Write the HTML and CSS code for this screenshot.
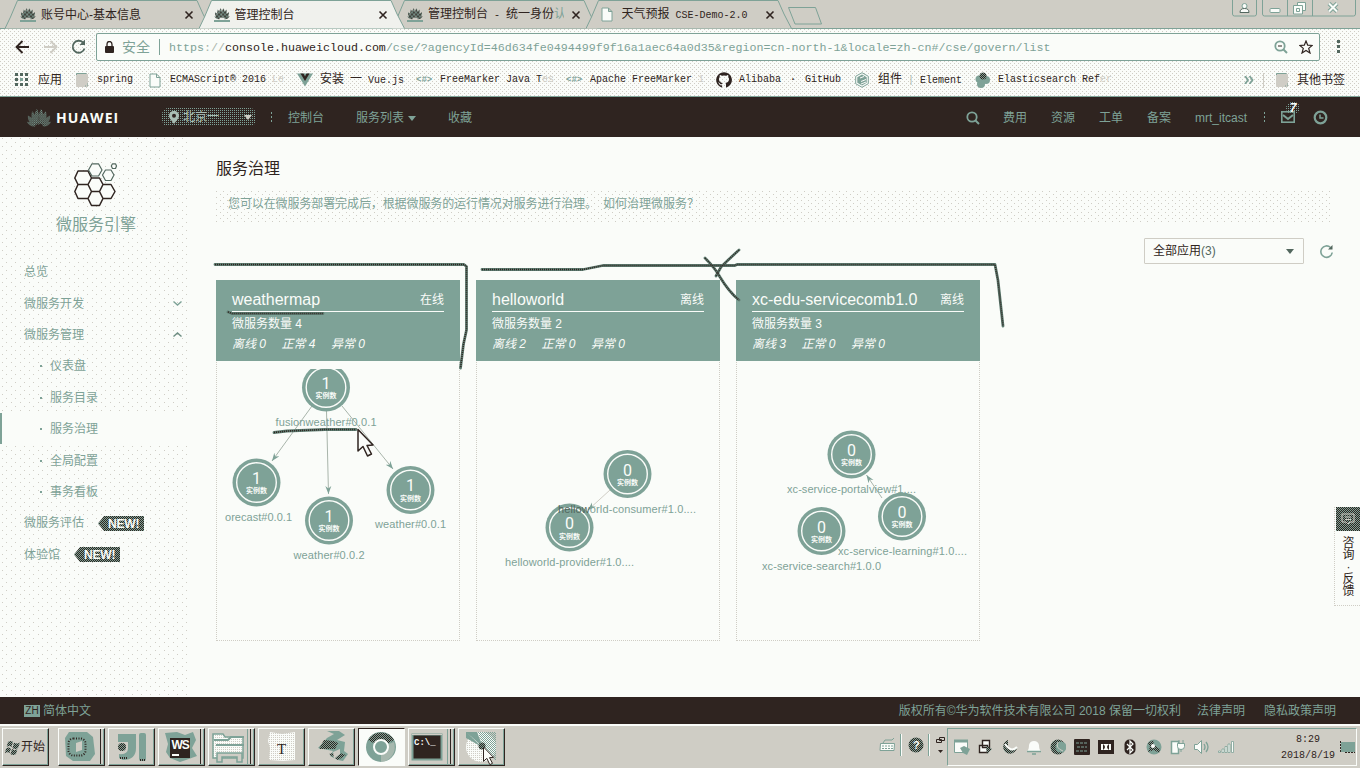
FILE: index.html
```html
<!DOCTYPE html>
<html lang="zh-CN">
<head>
<meta charset="utf-8">
<title>管理控制台</title>
<link rel="stylesheet" href="styles.css">
</head>
<body>
<svg class="defs" width="0" height="0">
  <defs>
    <pattern id="ink" width="2" height="2" patternUnits="userSpaceOnUse"><rect width="2" height="2" fill="#7ea297"/><rect width="1" height="1" fill="#2f2420"/><rect x="1" y="1" width="1" height="1" fill="#2f2420"/></pattern>
    <pattern id="mesh" width="2" height="2" patternUnits="userSpaceOnUse"><rect width="1" height="1" fill="#7ea297"/><rect x="1" y="1" width="1" height="1" fill="#7ea297"/></pattern>
    <pattern id="pale" width="2" height="2" patternUnits="userSpaceOnUse"><rect width="2" height="2" fill="#fafcf9"/><rect width="1" height="1" fill="#cfcdc5"/></pattern>
    <marker id="arrow" markerWidth="9" markerHeight="8" refX="8" refY="4" orient="auto" markerUnits="userSpaceOnUse"><path d="M0 1L8 4L0 7L2.500 4Z" fill="#7ea297"/></marker>
    <symbol id="petals" viewBox="0 0 24 18"><path d="M11.500 16C7 12 7 5 10 1c2 3 3 9 1.500 15zM12.500 16C17 12 17 5 14 1c-2 3-3 9-1.500 15zM10 16C5 13 4 8 5.500 3 9 6 10 11 10 16zM14 16c5-3 6-8 4.500-13C15 6 14 11 14 16zM9 16.500C4 16 1 12 1.500 7 5 8.500 8 12 9 16.500zM15 16.500c5-.5 8-4.500 7.500-9.500C19 8.500 16 12 15 16.500zM8.500 17.500C5 18 2 16 .5 13c3.500 0 6 1.500 8 4.500zM15.500 17.500c3.500.5 6.500-1.500 8-4.500-3.500 0-6 1.500-8 4.500z"/></symbol>
    <symbol id="favicon" viewBox="0 0 16 16"><use href="#petals" width="16" height="13" fill="url(#ink)"/><path d="M0 14h16" stroke="#7ea297" stroke-width="2"/></symbol>
    <symbol id="close" viewBox="0 0 10 10"><path d="M1.500 1.500l7 7M8.500 1.500l-7 7" stroke="#2f2420" stroke-width="1.600"/></symbol>
    <symbol id="doc" viewBox="0 0 12 15"><path d="M1 1h6.500L11 4.500V14H1zM7.500 1v3.500H11" fill="#fafcf9" stroke="#7ea297"/></symbol>
    <symbol id="folder" viewBox="0 0 12 14"><path d="M.5 13.500V.5h10l1 1v12z" fill="#cfcdc5" stroke="#cfcdc5"/><path d="M.5 2V.5h10" fill="none" stroke="#7ea297"/><path d="M9 13h2.500v-3" stroke="#7ea297" fill="none" stroke-dasharray="1 1"/></symbol>
    <symbol id="tab" viewBox="0 0 208 29"><path d="M0 28.500L5.500 17 12.500.5H192L198 14l7.500 14.500" stroke="#7ea297"/></symbol>
    <symbol id="glass" viewBox="0 0 14 14"><circle cx="6" cy="6" r="4.700" fill="none" stroke="#7ea297" stroke-width="1.800"/><path d="M9.500 9.500l3.500 3.500" stroke="#7ea297" stroke-width="2"/></symbol>
    <symbol id="node" viewBox="-25 -25 50 50"><circle r="24" fill="#7ea297"/><circle r="19.800" fill="none" stroke="#fafcf9" stroke-width="1.400"/></symbol>
    <symbol id="new" viewBox="0 0 46 15"><path d="M0 7.500L6 0h40v15H6z" fill="url(#ink)"/></symbol>
    <symbol id="pointer" viewBox="0 0 18 30"><path d="M1.500 1.500V23l5-4.500 4.500 9.500 4-2-4.500-8.500 6-.5z" fill="#fafcf9" stroke="#2f2420" stroke-width="1.500"/></symbol>
    <g id="strokes">
      <path d="M215 264.500H464l2.500 2V330l-3 14-3 24"/>
      <path d="M482 269.500H583l20-4H735l2-1H995l3 16 5 45.500"/>
      <path d="M705 258q10 10 15 19 9 15 19 23M739 250q-10 9-18 17l-5 9"/>
      <path d="M228 312l4 1.500H323"/>
      <path d="M274 432.500l13-1.500 38-1.500h31"/>
    </g>
  </defs>
</svg>

<div class="tabstrip">
  <div class="tab tab-first"><svg class="tab-shape"><use href="#tab" fill="#cfcdc5"/></svg><svg class="fav"><use href="#favicon"/></svg><span class="tab-title">账号中心-基本信息</span><svg class="x"><use href="#close"/></svg></div>
  <div class="tab tab-active"><svg class="tab-shape"><use href="#tab" fill="#f0f1ed"/></svg><svg class="fav"><use href="#favicon"/></svg><span class="tab-title">管理控制台</span><svg class="x"><use href="#close"/></svg></div>
  <div class="tab"><svg class="tab-shape"><use href="#tab" fill="#cfcdc5"/></svg><svg class="fav"><use href="#favicon"/></svg><span class="tab-title">管理控制台<i class="mono"> - </i>统一身份<i class="fade-end">认</i></span><svg class="x"><use href="#close"/></svg></div>
  <div class="tab"><svg class="tab-shape"><use href="#tab" fill="#cfcdc5"/></svg><svg class="fav" viewBox="0 0 16 16"><use href="#doc" width="12" height="15"/></svg><span class="tab-title">天气预报<i class="mono"> CSE-Demo-2.0</i></span><svg class="x"><use href="#close"/></svg></div>
  <svg class="newtab" width="36" height="19"><path d="M1.500.5h27l6 16.500H8z" fill="#cfcdc5" stroke="#7ea297"/></svg>
  <div class="winbtns">
    <svg width="25" height="17"><path d="M.5 0v14q0 2 2 2h20q2 0 2-2V0" fill="none" stroke="#7ea297"/><circle cx="12.500" cy="6" r="2.500" fill="#fafcf9" stroke="#7ea297"/><path d="M8 12.500q0-4 4.500-4t4.500 4z" fill="#fafcf9" stroke="#52675e"/></svg>
    <svg width="94" height="17"><path d="M.5 0v14q0 2 2 2h89q2 0 2-2V0M25.500 0v16M50.500 0v16" fill="none" stroke="#7ea297"/><rect x="8" y="8.500" width="10" height="4" rx="1" fill="#fafcf9" stroke="#7ea297"/><path d="M35.500 2.500h8v8h-8z" fill="#fafcf9" stroke="#7ea297"/><path d="M31.500 5.500h9v8.500h-9zM34.500 8.500h3v3h-3z" fill="#fafcf9" stroke="#7ea297"/><path d="M67 3.500l8 8M75 3.500l-8 8" stroke="#7ea297" stroke-width="4"/><path d="M67 3.500l8 8M75 3.500l-8 8" stroke="#fafcf9" stroke-width="2"/></svg>
  </div>
</div>

<div class="chrome">
  <div class="toolbar">
    <svg width="82" height="20" fill="none" stroke-width="1.800"><path d="M14 10H1.500M7.500 4l-6 6 6 6" stroke="#2f2420" /><path d="M29 10h12.500M35.500 4l6 6-6 6" stroke="#cfcdc5"/><path d="M68 5.500a6 6 0 1 0 1.500 6" stroke="#52675e"/><path d="M64.500 8h5.500V2.500z" fill="#52675e"/></svg>
    <div class="address">
      <svg class="lock" width="9" height="12"><path d="M2 5V3.500q0-3 2.500-3T7 3.500V5" fill="none" stroke="#2f2420" stroke-width="1.300"/><rect y="5" width="9" height="7" rx="1" fill="#2f2420"/></svg>
      <span class="safe">安全</span><span class="bar"></span>
      <span class="url">https<s>://</s><b>console.huaweicloud.com</b>/cse/?agencyId=46d634fe0494499f9f16a1aec64a0d35&amp;region=cn-north-1&amp;locale=zh-cn#/cse/govern/list</span>
      <svg width="14" height="14"><use href="#glass"/><path d="M4 6h4" stroke="#2f2420"/></svg>
      <svg class="star" width="14" height="14"><path d="M7 1l1.700 4.200 4.500.3-3.500 2.900L11 13 7 10.400 3 13l1.300-4.600L.8 5.500l4.500-.3z" fill="none" stroke="#2f2420" stroke-width="1.200"/></svg>
    </div>
    <svg class="dots" width="4" height="14" fill="#52675e"><path d="M0 0h3v3H0zM0 5h3v3H0zM0 10h3v3H0z"/></svg>
  </div>
  <div class="bookmarks">
    <div class="bm w61"><svg width="14" height="14" fill="#52675e"><path d="M0 0h3v3H0zM5 0h3v3H5zM10 0h3v3h-3zM0 5h3v3H0zM10 5h3v3h-3zM0 10h3v3H0zM5 10h3v3H5zM10 10h3v3h-3z"/><path d="M5 5h3v3H5z" fill="#7ea297"/></svg><span>应用</span></div>
    <div class="bm w73"><svg width="12" height="14"><use href="#folder"/></svg><span class="mono">spring</span></div>
    <div class="bm w148"><svg width="12" height="15"><use href="#doc"/></svg><span class="mono">ECMAScript® 2016 <i class="faded">Le</i></span></div>
    <div class="bm w119"><svg width="16" height="14"><path d="M0 .5h16L8 13.500z" fill="#7ea297"/><path d="M3.500 .5h3L8 3.500 9.500.5h3L8 8z" fill="#2f2420"/></svg><span>安装<i class="mono"> </i>一<i class="mono"> Vue.js</i></span></div>
    <div class="bm w150"><b class="ftl">&lt;#&gt;</b><span class="mono">FreeMarker Java T<i class="faded">es</i></span></div>
    <div class="bm w150"><b class="ftl">&lt;#&gt;</b><span class="mono">Apache FreeMarker <i class="faded">1</i></span></div>
    <div class="bm w139"><svg width="16" height="16"><path d="M8 .2a7.800 7.800 0 0 0-2.500 15.200c.4.100.6-.2.6-.5v-1.600c-2.200.5-2.700-1-2.700-1-.4-.9-.9-1.200-.9-1.200-.7-.5.1-.5.1-.5.800.1 1.200.8 1.200.8.700 1.200 1.900.9 2.300.7 0-.5.300-.9.500-1.100-1.700-.2-3.600-.9-3.600-3.900 0-.9.300-1.600.8-2.100-.1-.2-.4-1 .1-2.100 0 0 .7-.2 2.100.8a7.500 7.500 0 0 1 4 0c1.500-1 2.100-.8 2.100-.8.500 1.100.2 1.900.1 2.100.5.500.8 1.200.8 2.100 0 3-1.800 3.700-3.600 3.900.3.200.6.700.6 1.500v2.400c0 .3.200.6.600.5A7.800 7.800 0 0 0 8 .2z" fill="#2f2420"/></svg><span class="mono">Alibaba<i class="middot">·</i>GitHub</span></div>
    <div class="bm w120"><svg width="14" height="16"><path d="M7 .7l6.300 3.600v7.400L7 15.300.7 11.700V4.300z" fill="#fafcf9" stroke="#7ea297"/><path d="M7 2.500l4.700 2.700v5.600L7 13.500l-4.700-2.700V5.200z" fill="#7ea297"/><path d="M5 6l4-1.500M6 9.500l5-2M6 12l5-2" stroke="#fafcf9"/></svg><span>组件<i class="mono"> <i class="pipe">|</i> Element</i></span></div>
    <div class="bm grow"><svg width="16" height="16" fill="#7ea297"><circle cx="4" cy="7" r="3.500"/><circle cx="11" cy="8" r="4"/><circle cx="6" cy="12" r="4"/><circle cx="8" cy="4" r="3.500" fill="url(#ink)"/></svg><span class="mono">Elasticsearch Ref<i class="faded">er</i></span></div>
    <svg class="more" width="10" height="8"><path d="M1 0l3 4-3 4M5.500 0l3 4-3 4" fill="none" stroke="#7ea297" stroke-width="1.800"/></svg>
    <span class="bmsep"></span>
    <div class="bm"><svg width="12" height="14"><use href="#folder"/></svg><span>其他书签</span></div>
  </div>
</div>

<header class="console">
  <svg class="hw" width="26" height="19"><use href="#petals" width="26" height="19" fill="url(#mesh)"/></svg><strong class="brand">HUAWEI</strong>
  <div class="region"><svg width="10" height="13"><path d="M5 13C2 9 0 7 0 4.800a5 5 0 0 1 10 0C10 7 8 9 5 13z" fill="#a9bdb3"/><circle cx="5" cy="4.800" r="2" fill="#2f2420"/></svg><span>北京一</span><i class="caret"></i></div>
  <i class="vdots"></i>
  <nav class="left"><a>控制台</a><a>服务列表<i class="caret"></i></a><a>收藏</a></nav>
  <nav class="right"><svg width="14" height="14"><use href="#glass"/></svg><a>费用</a><a>资源</a><a>工单</a><a>备案</a><a>mrt_itcast</a></nav>
  <i class="vdots"></i>
  <div class="mail"><svg width="14" height="12"><rect x=".8" y=".8" width="12.400" height="10.400" fill="none" stroke="#7ea297" stroke-width="1.600"/><path d="M2 4l5 4 5-4" fill="none" stroke="#7ea297" stroke-width="2"/></svg><em>7</em></div>
  <svg width="15" height="15"><circle cx="7.500" cy="7.500" r="5.800" fill="none" stroke="#7ea297" stroke-width="2.200"/><path d="M7 4.500V8h3.500" fill="none" stroke="#7ea297" stroke-width="1.500"/></svg>
</header>

<div class="body">
  <aside class="side">
    <svg class="hex" width="44" height="45" viewBox="0 0 44 45" fill="#fafcf9" stroke="#2f2420" stroke-linejoin="round">
      <path d="M4 8h10l3.500 7L14 21.500H4L.800 15zM4 21.500h10l3.500 7L14 35.500H4L.800 28.500zM17.500 15h8L29 21.500l-3.500 7h-8L14 21.500zM17.500 28.500h8l3.500 7-3.500 7h-8l-3.500-7zM29 21.500h8l4 7-4 7h-8l-3.500-7z" stroke-width="1.500"/>
      <path d="M18 .8h6.500L28 7l-3.500 6H18l-3.500-6zM31.500 7h5.500l3 5-3 5.500h-5.500l-3-5.500zM38.500.8h3l1 2.200-1 2.500h-3L37.300 3z" stroke="#52675e" stroke-width="1.200"/></svg>
    <h2>微服务引擎</h2>
    <ul class="menu">
      <li>总览</li>
      <li>微服务开发<svg class="chev" width="9" height="5"><path d="M.5.500l4 3.500 4-3.500" fill="none" stroke="#7ea297" stroke-width="1.400"/></svg></li>
      <li>微服务管理<svg class="chev" width="9" height="5"><path d="M.5 4.500l4-3.500 4 3.500" fill="none" stroke="#6d8d82" stroke-width="1.400"/></svg></li>
      <li class="sub">仪表盘</li>
      <li class="sub">服务目录</li>
      <li class="sub current">服务治理</li>
      <li class="sub">全局配置</li>
      <li class="sub">事务看板</li>
      <li>微服务评估<span class="new"><svg width="46" height="15"><use href="#new"/></svg><b>NEW!</b></span></li>
      <li>体验馆<span class="new"><svg width="46" height="15"><use href="#new"/></svg><b>NEW!</b></span></li>
    </ul>
  </aside>

  <main>
    <h1>服务治理</h1>
    <p class="notice"><span>您可以在微服务部署完成后，根据微服务的运行情况对服务进行治理。</span><a>如何治理微服务？</a></p>
    <div class="filter">
      <div class="select"><span>全部应用<i>(3)</i></span><i class="caret"></i></div>
      <svg width="15" height="15"><path d="M11.500 3.500a5.700 5.700 0 1 0 1.700 5" fill="none" stroke="#7ea297" stroke-width="1.600"/><path d="M9 5.500h4.500V1z" fill="#52675e"/></svg>
    </div>
    <div class="cards">
      <section class="card">
        <div class="head"><div class="name"><h3>weathermap</h3><span>在线</span></div><p>微服务数量 4</p><p class="stat"><span>离线 0</span><span>正常 4</span><span>异常 0</span></p></div>
        <svg class="graph" width="242" height="279" viewBox="217 361 242 279">
          <g stroke="#a9b5ab"><path d="M312 406L272 461" marker-end="url(#arrow)"/><path d="M326.500 411L328.500 494" marker-end="url(#arrow)"/><path d="M342 406L393 469" marker-end="url(#arrow)"/></g>
          <clipPath id="top"><rect x="217" y="369" width="242" height="271"/></clipPath>
          <g clip-path="url(#top)"><use href="#node" x="301" y="362.500" width="50" height="50"/></g><use href="#node" x="231.500" y="457.500" width="50" height="50"/><use href="#node" x="304" y="495.500" width="50" height="50"/><use href="#node" x="385.500" y="465" width="50" height="50"/>
          <g class="count"><text x="326" y="388.500">1</text><text x="256.500" y="483.500">1</text><text x="329" y="521.500">1</text><text x="410.500" y="491">1</text></g>
          <g class="unit"><text x="326" y="398">实例数</text><text x="256.500" y="493">实例数</text><text x="329" y="531">实例数</text><text x="410.500" y="500.500">实例数</text></g>
          <g class="label"><text x="326" y="426" textLength="101">fusionweather#0.0.1</text><text x="258.500" y="521" textLength="67">orecast#0.0.1</text><text x="329" y="559" textLength="71">weather#0.0.2</text><text x="410.500" y="528" textLength="71">weather#0.0.1</text></g>
        </svg>
      </section>
      <section class="card">
        <div class="head"><div class="name"><h3>helloworld</h3><span>离线</span></div><p>微服务数量 2</p><p class="stat"><span>离线 2</span><span>正常 0</span><span>异常 0</span></p></div>
        <svg class="graph" width="242" height="279" viewBox="477 361 242 279">
          <path d="M610 490L588 510" stroke="#cfcdc5" marker-end="url(#arrow)"/>
          <use href="#node" x="602.500" y="449" width="50" height="50"/><use href="#node" x="544.500" y="502.500" width="50" height="50"/>
          <g class="count"><text x="627.500" y="475.500">0</text><text x="569.500" y="529">0</text></g>
          <g class="unit"><text x="627.500" y="485">实例数</text><text x="569.500" y="538.500">实例数</text></g>
          <g class="label"><text x="627" y="513" textLength="138"><tspan fill="#52675e">hellow</tspan>orld-consumer#1.0....</text><text x="569.500" y="566" textLength="129">helloworld-provider#1.0....</text></g>
        </svg>
      </section>
      <section class="card">
        <div class="head"><div class="name"><h3>xc-edu-servicecomb1.0</h3><span>离线</span></div><p>微服务数量 3</p><p class="stat"><span>离线 3</span><span>正常 0</span><span>异常 0</span></p></div>
        <svg class="graph" width="242" height="279" viewBox="737 361 242 279">
          <path d="M882 498L866.500 475" stroke="#a9b5ab" marker-end="url(#arrow)"/>
          <use href="#node" x="826.500" y="429.500" width="50" height="50"/><use href="#node" x="796.500" y="506" width="50" height="50"/><use href="#node" x="877" y="491.500" width="50" height="50"/>
          <g class="count"><text x="851.500" y="455.500">0</text><text x="821.500" y="532.500">0</text><text x="902" y="517.500">0</text></g>
          <g class="unit"><text x="851.500" y="465">实例数</text><text x="821.500" y="542">实例数</text><text x="902" y="527">实例数</text></g>
          <g class="label"><text x="851.500" y="493" textLength="129">xc-service-portalview#1....</text><text x="821.500" y="570" textLength="119">xc-service-search#1.0.0</text><text x="902.500" y="555" textLength="129">xc-service-learning#1.0....</text></g>
        </svg>
      </section>
    </div>
  </main>
  <div class="feedback"><div class="fbicon"><svg width="14" height="12"><path d="M1 1h12v8H9l-2 2-2-2H1zM4 4h6M4 6.500h6" fill="none" stroke="#cfcdc5"/></svg></div><div class="fbtext"><span>咨</span><span>询</span><span>·</span><span>反</span><span>馈</span></div></div>
</div>

<footer><span class="zh">ZH</span><span class="lang">简体中文</span><span>版权所有©华为软件技术有限公司 2018 保留一切权利</span><a>法律声明</a><a>隐私政策声明</a></footer>

<div class="taskbar">
  <div class="btn start"><svg width="16" height="15"><path d="M3 2q3-2 5 0L6.500 7Q4 5 1.500 7zM9 2.500q3 2 6 0L13 8q-3 2-5.500 0zM1 8.500q3-2 5 0L4.500 13Q2 11.500 0 13.500zM7 9q3 2 5.500 0L11 14q-3 2-5.500 0z" fill="url(#ink)"/></svg><span>开始</span></div>
  <div class="btns">
    <div class="btn stack"><svg viewBox="0 0 44 35"><path d="M10 3h18l6 5 2 17-5 7H14l-7-5-1-18z" fill="#7ea297"/><rect x="9.500" y="9.500" width="17" height="17" rx="5" fill="none" stroke="#2f2420" stroke-width="2" stroke-dasharray="1 1.500"/><path d="M17 14l6-2v9l-6 2z" fill="#cfcdc5"/></svg></div>
    <div class="btn"><svg viewBox="0 0 44 35"><path d="M9 5h18v14q0 12-13 12l-4-2v-4q9 1 9-6v-6H9z" fill="#7ea297"/><rect x="30" y="4" width="7" height="28" rx="2" fill="#7ea297"/><circle cx="13" cy="18" r="4" fill="url(#ink)"/><path d="M11 29h8M31 31h5" stroke="#2f2420" stroke-width="2" stroke-dasharray="1 1"/></svg></div>
    <div class="btn stack"><svg viewBox="0 0 44 35"><path d="M6 4l12-1 8 3 8-3 3 8-4 8 5 8-11 4-6 2-10-4-4-6 2-8z" fill="#7ea297"/><rect x="11" y="9" width="20" height="20" fill="#2f2420"/><path d="M13 26h7" stroke="#fafcf9" stroke-width="2"/><text class="ws" x="12.500" y="20">WS</text></svg></div>
    <div class="btn stack3"><svg viewBox="0 0 44 35"><path d="M4 10V5h10l2 3h18v21H4z" fill="url(#pale)" stroke="#7ea297" stroke-width="1.500"/><path d="M5 11h14l3-3h13M7 16h28" stroke="#7ea297" stroke-width="2" fill="none"/><path d="M8 33v-9h25v9h-5v-5H13v5z" fill="#cfcdc5" stroke="#7ea297" stroke-width="1.500"/></svg></div>
    <div class="btn"><svg viewBox="0 0 44 35"><path d="M11 3l12 2 13-2v28l-12 1-14-1 1-12-2-7z" fill="url(#pale)"/><text class="tee" x="18" y="25">T</text></svg></div>
    <div class="btn"><svg viewBox="0 0 44 35"><path d="M18 2h12l6 4-8 5 8 2-1 9 4 3-5 7-5-1-8-4 3-5-15-3 9-10 7-4z" fill="#7ea297"/><path d="M10 20l5-9 10 1 4 2-3 6zM20 25l8-2 9 3-8 5z" fill="url(#ink)"/><path d="M24 23l7-3v5l-6 5z" fill="#cfcdc5"/></svg></div>
    <div class="btn pressed"><svg viewBox="0 0 44 35"><circle cx="22" cy="18" r="15" fill="#7ea297"/><path d="M9 11a15 15 0 0 1 26 0L22 18z" fill="url(#ink)"/><path d="M22 33a15 15 0 0 0 13-20L22 18z" fill="#cfcdc5" opacity=".5"/><circle cx="22" cy="18" r="7" fill="#7ea297" stroke="#fafcf9" stroke-width="2"/></svg></div>
    <div class="btn stack3"><svg viewBox="0 0 44 35"><rect x="3.500" y="5.500" width="29" height="25" fill="#2f2420" stroke="#7ea297" stroke-width="2"/><path d="M3 5.500h30" stroke="#cfcdc5"/><text class="cmd" x="5" y="16">C:\_</text></svg></div>
    <div class="btn"><svg viewBox="0 0 44 35"><circle cx="22" cy="18" r="15" fill="url(#pale)"/><path d="M7 3h11l6 15zM7 3v6l16 9z" fill="#7ea297"/><path d="M19 3h18v29L24 18z" fill="url(#mesh)"/><circle cx="23" cy="17" r="3.500" fill="url(#ink)"/></svg><svg class="mouse" width="13" height="20"><use href="#pointer"/></svg></div>
  </div>
  <div class="tools">
    <svg width="17" height="16"><path d="M1.500 6.500h14l-.5 7H1z" fill="#fafcf9" stroke="#7ea297"/><path d="M3 9h11M3 11.500h11" stroke="#7ea297" stroke-dasharray="2 1"/><path d="M4 6l2-3h7l2-2" fill="none" stroke="#7ea297"/></svg>
    <i class="groove"></i>
    <svg width="16" height="16"><circle cx="8" cy="8" r="7.500" fill="url(#ink)"/><text class="q" x="5" y="12">?</text></svg>
    <i class="groove"></i>
    <svg width="9" height="20"><path d="M3.500 2.500h5v3h-5zM.5 4.500h5v3h-5z" fill="#cfcdc5" stroke="#2f2420"/><path d="M2 15h5l-2.500 3z" fill="#2f2420"/></svg>
  </div>
  <div class="tray">
    <svg viewBox="0 0 16 16"><path d="M.5 1.500h13v12H.5z" fill="#fafcf9" stroke="#7ea297"/><path d="M0 2h14" stroke="#7ea297" stroke-width="3"/><path d="M6 9l4-2 6 3-3 6-4-2z" fill="#7ea297"/></svg>
    <svg viewBox="0 0 16 16"><path d="M4.500 1.500h7v7h-7zM1.500 6.500h8v7h-8z" fill="#fafcf9" stroke="#2f2420" stroke-width="1.400"/><path d="M8 7l6 3-5 5z" fill="url(#ink)"/></svg>
    <svg viewBox="0 0 16 16"><path d="M6 1a7 7 0 1 0 9 8q-6 4-9-1z" fill="url(#ink)"/><path d="M3 5q6 9 12 3" fill="none" stroke="#fafcf9" stroke-width="2"/></svg>
    <svg viewBox="0 0 16 16"><path d="M1 12q2-1 2-6 1-4 5-4t5 4q0 5 2 6z" fill="#fafcf9"/><path d="M1 12.500h14M6 15h4" stroke="#7ea297" stroke-width="1.500"/></svg>
    <svg viewBox="0 0 16 16"><circle cx="8" cy="8" r="7.500" fill="url(#ink)"/><circle cx="11" cy="8" r="5.500" fill="#7ea297"/><path d="M8 3q-3 6 5 9" stroke="#cfcdc5" fill="none"/></svg>
    <svg viewBox="0 0 16 16"><rect width="16" height="16" rx="1" fill="#2f2420"/><path d="M2 4h12M3 8h10M2 12h12" stroke="#7ea297" stroke-dasharray="3 1"/></svg>
    <svg viewBox="0 0 16 16"><rect y="1" width="16" height="14" fill="#2f2420"/><path d="M3 5h10v6H3z" fill="#fafcf9"/><path d="M5 5q4 3 0 6M11 5q-4 3 0 6" fill="#2f2420"/></svg>
    <svg viewBox="0 0 16 16"><rect x="2.500" y=".5" width="11" height="15" rx="5" fill="#2f2420"/><path d="M5 5l6 6-3 3V2l3 3-6 6" fill="none" stroke="#fafcf9" stroke-width="1.200"/></svg>
    <svg viewBox="0 0 16 16"><circle cx="8" cy="8" r="7.500" fill="#7ea297"/><path d="M2 4l5-3 1 5 6 4-1 4-5-3-6 2 2-5z" fill="url(#ink)"/><circle cx="7" cy="7" r="2" fill="#fafcf9"/></svg>
    <svg viewBox="0 0 16 16"><path d="M1.500 2.500h7v12h-7z" fill="#fafcf9" stroke="#7ea297" stroke-width="1.500"/><path d="M7.500 4.500h7v3q0 3-3.500 3t-3.500-3zM11 10v3M9 1v3M13 1v3" fill="#fafcf9" stroke="#7ea297"/></svg>
    <svg viewBox="0 0 16 16"><path d="M.5 5.500h3l4-4v13l-4-4h-3z" fill="#fafcf9" stroke="#7ea297"/><path d="M10 5q2 3 0 6M12 3q4 5 0 10" fill="none" stroke="#7ea297" stroke-width="1.300"/></svg>
    <svg viewBox="0 0 16 16"><path d="M.5 12v1.500h2V12zM4 10v3.500h2V10zM7 7.500v6h2v-6zM10 5v8.500h2V5zM13.500 2.500v11h2v-11z" fill="#fafcf9" stroke="#7ea297" stroke-width=".8"/></svg>
    <div class="clock"><span>8:29</span><span>2018/8/19</span></div>
    <svg class="desk" viewBox="0 0 16 14"><path d="M1 2h14v10H1z" fill="#7ea297"/><path d="M.5 1v12M5 12.500h10" fill="none" stroke="#2f2420" stroke-dasharray="2 1"/></svg>
  </div>
</div>

<svg class="marks" width="1360" height="768" fill="none" stroke-linejoin="round">
  <use href="#strokes" stroke="#5c7a6f" stroke-width="2.800" stroke-linecap="round"/>
  <use href="#strokes" stroke="#2f2420" stroke-width="1.600" stroke-dasharray="1 1"/>
  <use href="#pointer" x="356.500" y="428" width="18" height="30"/>
</svg>
</body>
</html>
```
FILE: styles.css
```css
:root {
  --white: #fafcf9;
  --teal: #7ea297;
  --beige: #cfcdc5;
  --dark: #2f2420;
  --dot: conic-gradient(at 1px 1px, transparent 75%, #cfcdc5 0);
  --teal-dot: conic-gradient(at 1px 1px, transparent 75%, #7ea297 0);
  --dark-dot: conic-gradient(at 1px 1px, transparent 75%, #2f2420 0);
}
* { box-sizing: border-box; }
body {
  margin: 0;
  width: 1360px;
  height: 768px;
  overflow: hidden;
  position: relative;
  display: flex;
  flex-direction: column;
  background: var(--white);
  color: var(--teal);
  font: 12px/16px "Liberation Sans", "Noto Sans CJK SC", sans-serif;
  white-space: nowrap;
}
h1, h2, h3, p, ul { margin: 0; padding: 0; font-weight: normal; }
i, em { font-style: normal; }
svg { flex: none; display: block; }
.defs { position: absolute; }
.mono { font-family: "Liberation Mono", "Noto Sans CJK SC", monospace; font-size: 10px; white-space: pre; }
.faded { color: var(--beige); }
.caret { display: inline-block; border: 4px solid transparent; border-top: 5px solid var(--teal); border-bottom: 0; }

/* Browser tabs */
.tabstrip { height: 29px; flex: none; display: flex; padding-left: 5px; background: var(--beige); border-bottom: 1px solid var(--teal); color: var(--dark); }
.tab { position: relative; width: 193.500px; height: 29px; display: flex; align-items: center; padding: 1px 0 0 15px; }
.tab-active { z-index: 2; }
.tab-shape { position: absolute; left: 0; top: 0; width: 208px; height: 29px; z-index: 0; }
.fav, .x, .tab-title { position: relative; }
.fav { width: 16px; height: 16px; }
.tab-title { width: 136px; margin-left: 5px; overflow: hidden; }
.fade-end { color: var(--teal); }
.x { width: 10px; height: 10px; margin-left: 7px; }
.newtab { margin: 7px 0 0 8px; }
.winbtns { margin-left: auto; padding-right: 4px; display: flex; gap: 5px; }

/* Address bar and bookmarks */
.chrome {
  height: 68px; flex: none;
  background-color: var(--white);
  background-image: var(--dot), var(--dot);
  background-size: 4px 4px;
  background-position: 0 0, 2px 2px;
  border-bottom: 1px solid var(--teal);
  color: var(--dark);
}
.toolbar { height: 36px; display: flex; align-items: center; padding-left: 15px; }
.toolbar > svg { margin-right: -1px; }
.address { width: 1224px; height: 28px; border: 1px solid var(--teal); border-radius: 2px; background: var(--white); display: flex; align-items: center; padding-left: 8px; }
.safe { font-size: 14px; color: var(--teal); margin-left: 8px; }
.bar { width: 1px; height: 16px; background: var(--teal); margin: 0 9px; }
.url { width: 1105px; color: var(--teal); font: 11.670px/16px "Liberation Mono", monospace; padding-top: 1px; }
.url b { color: var(--dark); font-weight: normal; }
.url s { text-decoration: none; color: #a9b5ab; }
.star { margin-left: 11px; }
.toolbar > .dots { margin-left: 17px; }
.bookmarks { height: 30px; display: flex; align-items: center; padding-left: 15px; }
.bm { display: flex; align-items: center; gap: 9px; }
.bm span { flex: none; }
.w61 { width: 61px; } .w73 { width: 73px; } .w148 { width: 148px; } .w119 { width: 119px; }
.w150 { width: 150px; } .w139 { width: 139px; } .w120 { width: 120px; } .grow { width: 269px; }
.w119, .w139, .grow, .w150 { gap: 7px; }
.w150 { gap: 8px; }
.ftl { width: 16px; color: var(--teal); font: bold 9px/12px "Liberation Mono", monospace; }
.middot { display: inline-block; width: 24px; text-align: center; font-weight: bold; }
.pipe { color: #a9b5ab; }
.bmsep { width: 1px; height: 15px; background: var(--beige); margin: 0 12px 0 9px; }

/* Console header */
.console { height: 40px; flex: none; display: flex; align-items: center; background: var(--dark); padding-left: 26px; }
.brand { font: bold 14px/20px "Open Sans", "Liberation Sans", sans-serif; letter-spacing: 1.050px; color: var(--white); width: 64px; margin-left: 4px; padding-top: 2px; }
.region {
  width: 94px; height: 18px; margin-left: 42px; border-radius: 6px; padding: 0 4px 0 7px;
  display: flex; align-items: center;
  background-image: var(--teal-dot); background-size: 2px 2px;
}
.region span { margin-left: 4px; color: #a9bdb3; }
.region .caret { margin-left: auto; border-top-color: var(--beige); }
.vdots { width: 1px; height: 10px; background: repeating-linear-gradient(var(--teal) 0 2px, transparent 2px 4px); margin-left: 15px; }
.left { display: flex; margin-left: 16px; gap: 32px; padding-top: 1px; }
.left .caret { margin-left: 4px; vertical-align: 1px; }
.right { display: flex; align-items: center; margin-left: auto; gap: 24px; padding-top: 1px; }
.right svg { margin-right: -1px; }
.right a:last-child { width: 52px; }
.right + .vdots { margin-left: 17px; }
.mail { position: relative; margin: 0 18px 0 16px; }
.mail em { position: absolute; left: 5px; top: -9px; width: 14px; height: 12px; border-radius: 6px; font: bold italic 12px/12px "Liberation Sans", sans-serif; color: var(--white); text-align: center; background-image: var(--teal-dot); background-size: 2px 2px; }
.console > svg:last-child { margin-right: 32px; }

/* Content */
.body { position: relative; height: 560px; flex: none; display: flex; }
.side {
  width: 190px; display: flex; flex-direction: column; align-items: center; padding-top: 26px;
  background-image: var(--dot), var(--dot);
  background-size: 9px 8px, 9px 8px;
  background-position: 2px 1px, 6px 5px;
}
.hex { margin-left: 2px; }
.side h2 { font-size: 16px; line-height: 20px; margin: 7px 0 21px 2px; }
.menu { list-style: none; width: 190px; }
.menu li { height: 31.400px; display: flex; align-items: center; padding: 1px 0 0 24px; position: relative; }
.menu .sub { padding-left: 50px; }
.menu .sub::before { content: ""; width: 2px; height: 2px; background: var(--teal); margin: 0 8px 0 -10px; }
.menu .current { background: var(--white); border-left: 2px solid var(--teal); padding-left: 48px; }
.chev { margin: 0 8px 0 auto; }
.new { position: relative; margin-left: 14px; }
.new b { position: absolute; left: 10px; top: 0; line-height: 16px; font-weight: bold; color: var(--white); letter-spacing: -.2px; }

main { width: 1117px; margin-left: 26px; padding-top: 21px; }
h1 { color: var(--dark); font-size: 16px; line-height: 22px; }
.notice {
  height: 32px; margin-top: 11px; padding: 5px 12px; display: flex;
  background-image: var(--dot), var(--dot);
  background-size: 7px 6px;
  background-position: 0 0, 4px 3px;
}
.notice span { letter-spacing: -.1px; }
.notice a { margin-left: 6px; }
.filter { display: flex; justify-content: flex-end; align-items: center; gap: 15px; margin-top: 15px; }
.filter > svg { margin-right: -1px; }
.select { width: 160px; height: 26px; border: 1px solid var(--beige); border-radius: 1px; display: flex; align-items: center; justify-content: space-between; padding: 0 9px 0 8px; color: var(--dark); }
.select span i { color: #52675e; }
.select .caret { border-top-color: #52675e; }
.cards { display: flex; gap: 16px; margin-top: 16px; }
.card { width: 244px; height: 361px; background: var(--white); border: 1px dotted var(--beige); border-top: 0; }
.head { height: 81px; margin: 0 -1px; padding: 8px 16px 0; background: var(--teal); color: var(--white); }
.name { display: flex; justify-content: space-between; align-items: center; height: 24px; border-bottom: 1px solid var(--white); }
.name h3 { font-size: 16px; line-height: 20px; }
.head p { margin-top: 4px; }
.stat { display: flex; gap: 15.500px; font-style: italic; }
.count, .unit, .label { text-anchor: middle; }
.count { font: 16px Roboto, sans-serif; fill: var(--white); }
.unit { font: bold 7px "Noto Sans CJK SC", sans-serif; fill: var(--white); }
.label { font: 11px "Liberation Sans", sans-serif; fill: var(--teal); }

.feedback { position: absolute; right: 0; top: 370px; width: 26px; height: 99px; border: 1px dotted var(--beige); border-top: 0; border-right: 0; background: var(--white); }
.fbicon {
  height: 24px; margin-left: 1px; display: flex; align-items: center; justify-content: center;
  background-color: var(--teal);
  background-image: var(--dark-dot), var(--dark-dot);
  background-size: 2px 2px;
  background-position: 0 0, 1px 1px;
}
.fbtext { display: flex; flex-direction: column; align-items: center; padding: 6px 0 0 2px; color: var(--dark); line-height: 12px; }

footer { height: 27px; flex: none; background: var(--dark); display: flex; align-items: center; padding: 0 24px; }
.zh { width: 16px; height: 12px; background: var(--teal); color: var(--dark); font-size: 10px; line-height: 12px; text-align: center; }
.lang { margin: 0 auto 0 3px; }
footer a { margin-left: 16px; }
footer a:last-child { margin-left: 19px; }

/* Taskbar */
.taskbar { height: 44px; flex: none; background: var(--beige); border-top: 1px solid var(--white); box-shadow: inset 0 1px var(--white); padding: 3px 3px 2px 2px; display: flex; align-items: flex-start; }
.btn { position: relative; width: 47px; height: 38px; flex: none; border: 1px solid var(--white); border-right: 1px solid var(--dark); border-bottom: 1px solid var(--dark); box-shadow: inset -1px -1px var(--teal); }
.btn > svg:first-child { width: 44px; height: 35px; }
.btn > .mouse { position: absolute; left: 23px; top: 17px; }
.start { display: flex; align-items: center; color: var(--dark); padding-left: 2px; }
.start > svg:first-child { width: 16px; height: 15px; }
.btns { display: flex; gap: 3px; margin-left: 9px; }
.stack { box-shadow: inset -1px -1px var(--teal), inset -3px 0 var(--beige), inset -4px 0 var(--dark); }
.stack3 { box-shadow: inset -1px -1px var(--teal), inset -3px 0 var(--beige), inset -4px 0 var(--dark), inset -6px 0 var(--beige), inset -7px 0 var(--teal); }
.pressed { background: var(--white); border: 1px solid var(--dark); border-right-color: var(--white); border-bottom-color: var(--white); box-shadow: none; }
.ws { font: bold 12px "Liberation Sans", sans-serif; fill: var(--white); letter-spacing: -1px; }
.tee { font: 15px "Liberation Serif", serif; fill: var(--dark); }
.cmd { font: bold 9px "Liberation Mono", monospace; fill: var(--white); }
.q { font: bold 11px "Liberation Sans", sans-serif; fill: var(--white); }
.btns + .tools { margin-left: auto; }
.tools { display: flex; align-items: center; height: 34px; gap: 4px; margin-right: 2px; }
.groove { width: 2px; height: 22px; border-left: 1px solid var(--teal); border-right: 1px solid var(--white); margin-right: 2px; }
.tray { width: 410px; height: 38px; border: 1px solid var(--teal); border-right-color: var(--white); border-bottom-color: var(--white); display: flex; align-items: center; gap: 8px; padding-left: 6px; }
.tray > svg { width: 16px; height: 16px; }
.clock { margin-left: auto; display: flex; flex-direction: column; align-items: center; font: 10px/16px "Liberation Mono", monospace; color: var(--dark); padding-top: 1px; }
.tray > .desk { height: 14px; margin-left: -3px; margin-right: 0; }
.marks { position: absolute; left: 0; top: 0; pointer-events: none; }
```
